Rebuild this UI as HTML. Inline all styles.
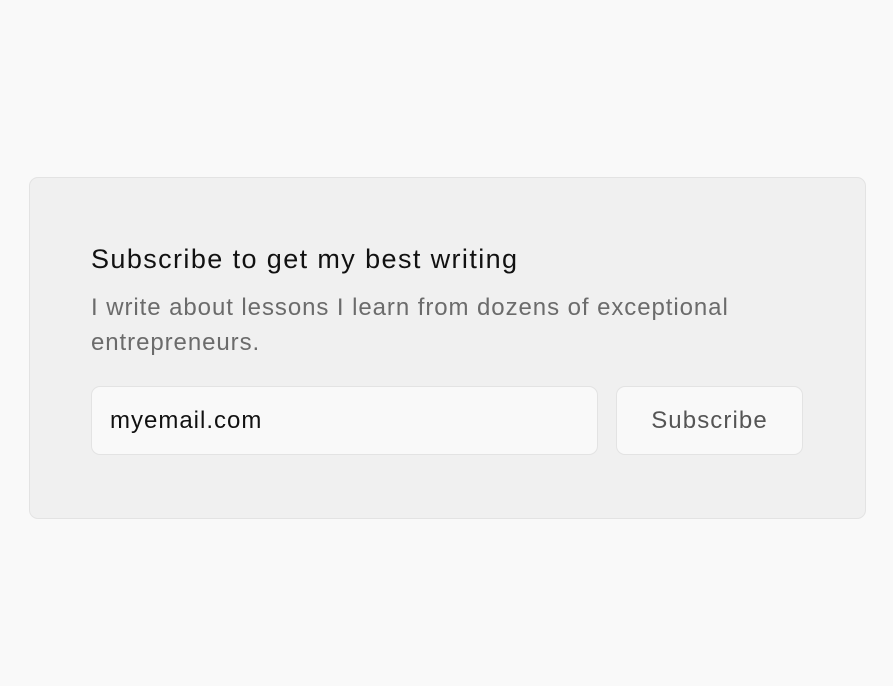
<!DOCTYPE html>
<html><head><style>
body{margin:0;background:#f9f9f9;width:893px;height:686px;font-family:"Liberation Sans",sans-serif;position:relative;overflow:hidden}
.card{position:absolute;left:29px;top:177px;width:837px;height:342px;background:#f0f0f0;border:1px solid #e3e3e3;border-radius:9px;box-sizing:border-box}
h1{position:absolute;left:91px;top:244px;margin:0;font-weight:normal;font-size:27px;color:#111;white-space:nowrap;letter-spacing:1.4px}
p{position:absolute;left:91px;top:290px;margin:0;font-size:24px;line-height:35px;color:#6b6b6b;width:700px;letter-spacing:0.93px}
.in{position:absolute;left:91px;top:386px;width:507px;height:69px;box-sizing:border-box;background:#f9f9f9;border:1px solid #e3e3e3;border-radius:9px;font-size:24px;color:#111;padding-left:18px;line-height:67px;letter-spacing:1px}
.btn{position:absolute;left:616px;top:386px;width:187px;height:69px;box-sizing:border-box;background:#f9f9f9;border:1px solid #e3e3e3;border-radius:9px;font-size:24px;color:#555;text-align:center;line-height:67px;letter-spacing:1.1px}
</style></head><body>
<div class="card"></div>
<h1>Subscribe to get my best writing</h1>
<p>I write about lessons I learn from dozens of exceptional entrepreneurs.</p>
<div class="in">myemail.com</div>
<div class="btn">Subscribe</div>
</body></html>
